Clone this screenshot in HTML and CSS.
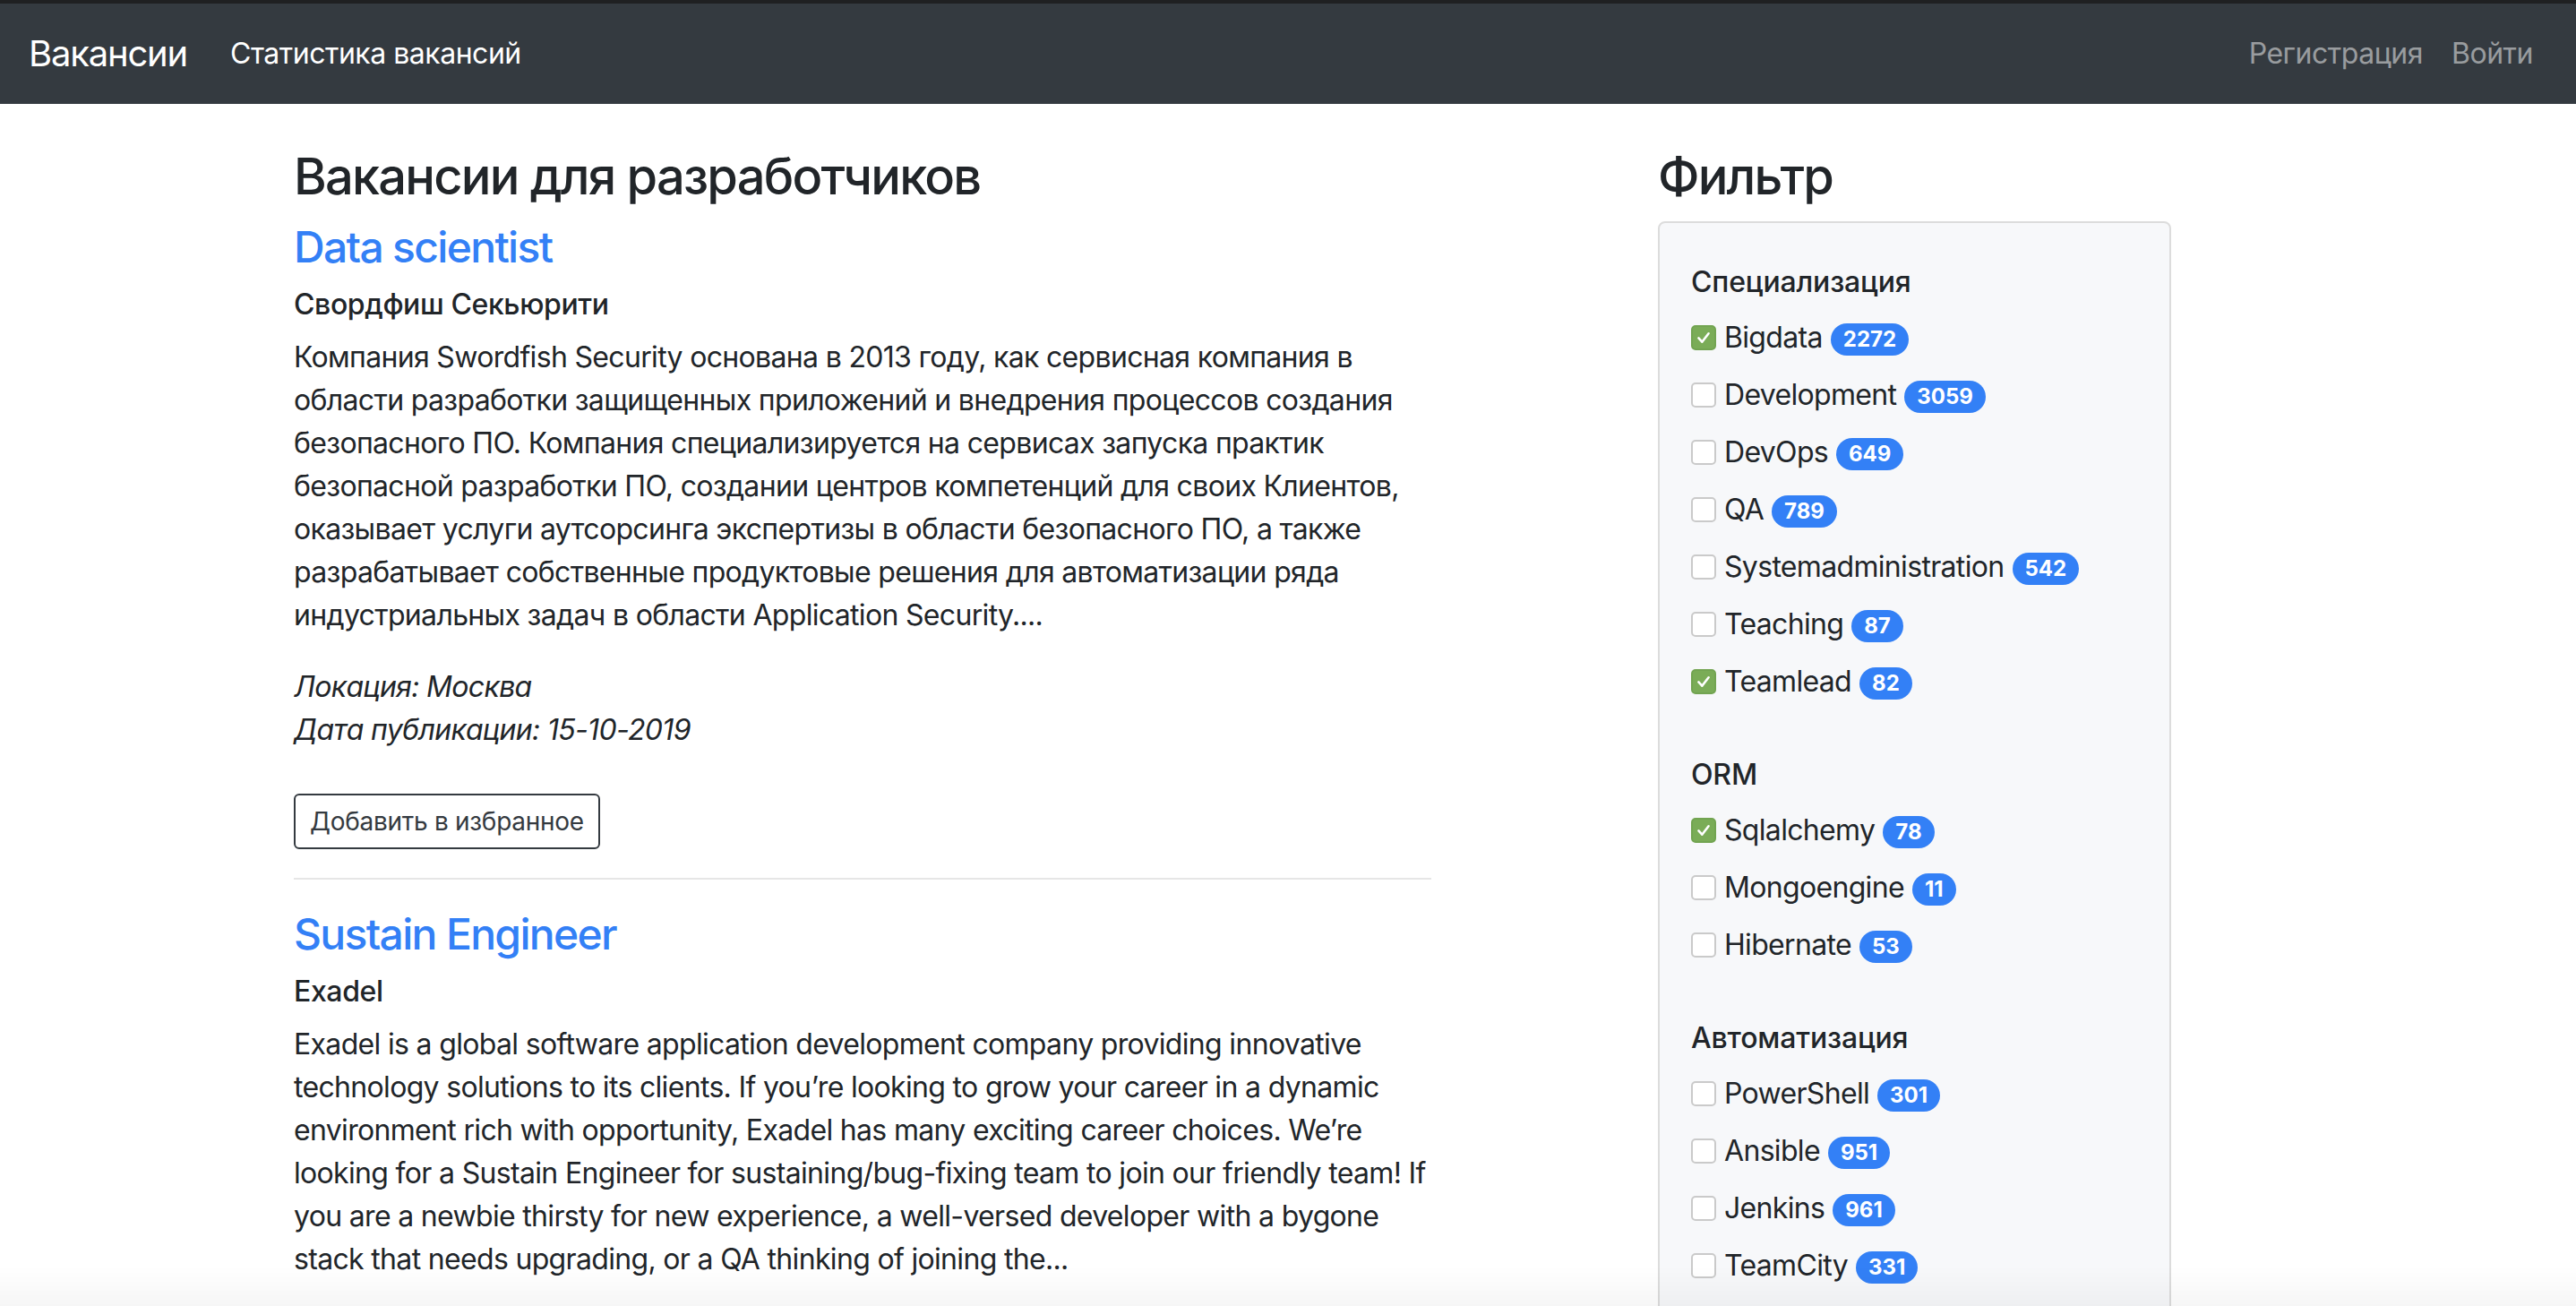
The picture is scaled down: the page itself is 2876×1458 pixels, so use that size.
FILE: index.html
```html
<!DOCTYPE html>
<html lang="ru">
<head>
<meta charset="utf-8">
<title>Вакансии для разработчиков</title>
<link rel="stylesheet" href="styles.css">
</head>
<body>
<header class="navbar">
  <div class="nav-left">
    <a class="brand" href="#">Вакансии</a>
    <a class="nav-link active" href="#">Статистика вакансий</a>
  </div>
  <div class="nav-right">
    <a class="nav-link muted" href="#">Регистрация</a>
    <a class="nav-link muted" href="#">Войти</a>
  </div>
</header>

<div class="container">
  <main class="main-col">
    <h3 class="page-title">Вакансии для разработчиков</h3>

    <article class="job">
      <h4 class="job-title"><a href="#">Data scientist</a></h4>
      <h6 class="company">Свордфиш Секьюрити</h6>
      <p class="desc">Компания Swordfish Security основана в 2013 году, как сервисная компания в<br>области разработки защищенных приложений и внедрения процессов создания<br>безопасного ПО. Компания специализируется на сервисах запуска практик<br>безопасной разработки ПО, создании центров компетенций для своих Клиентов,<br>оказывает услуги аутсорсинга экспертизы в области безопасного ПО, а также<br>разрабатывает собственные продуктовые решения для автоматизации ряда<br>индустриальных задач в области Application Security....</p>
      <p class="meta"><em>Локация: Москва</em><br><em>Дата публикации: 15-10-2019</em></p>
      <button class="btn-fav" type="button">Добавить в избранное</button>
    </article>
    <hr class="divider">

    <article class="job">
      <h4 class="job-title"><a href="#">Sustain Engineer</a></h4>
      <h6 class="company">Exadel</h6>
      <p class="desc">Exadel is a global software application development company providing innovative<br>technology solutions to its clients. If you’re looking to grow your career in a dynamic<br>environment rich with opportunity, Exadel has many exciting career choices. We’re<br>looking for a Sustain Engineer for sustaining/bug-fixing team to join our friendly team! If<br>you are a newbie thirsty for new experience, a well-versed developer with a bygone<br>stack that needs upgrading, or a QA thinking of joining the...</p>
    </article>
  </main>

  <aside class="filter-col">
    <h3 class="page-title">Фильтр</h3>
    <div class="filter-card">
      <section class="filter-group">
        <h6 class="group-title">Специализация</h6>
        <div class="item"><span class="check on"><svg viewBox="0 0 28 28"><path d="M7.5 14.5l4.5 5 8.5-11"/></svg></span><span class="name">Bigdata</span><span class="badge">2272</span></div>
        <div class="item"><span class="check"></span><span class="name">Development</span><span class="badge">3059</span></div>
        <div class="item"><span class="check"></span><span class="name">DevOps</span><span class="badge">649</span></div>
        <div class="item"><span class="check"></span><span class="name">QA</span><span class="badge">789</span></div>
        <div class="item"><span class="check"></span><span class="name">Systemadministration</span><span class="badge">542</span></div>
        <div class="item"><span class="check"></span><span class="name">Teaching</span><span class="badge">87</span></div>
        <div class="item"><span class="check on"><svg viewBox="0 0 28 28"><path d="M7.5 14.5l4.5 5 8.5-11"/></svg></span><span class="name">Teamlead</span><span class="badge">82</span></div>
      </section>
      <section class="filter-group">
        <h6 class="group-title">ORM</h6>
        <div class="item"><span class="check on"><svg viewBox="0 0 28 28"><path d="M7.5 14.5l4.5 5 8.5-11"/></svg></span><span class="name">Sqlalchemy</span><span class="badge">78</span></div>
        <div class="item"><span class="check"></span><span class="name">Mongoengine</span><span class="badge">11</span></div>
        <div class="item"><span class="check"></span><span class="name">Hibernate</span><span class="badge">53</span></div>
      </section>
      <section class="filter-group">
        <h6 class="group-title">Автоматизация</h6>
        <div class="item"><span class="check"></span><span class="name">PowerShell</span><span class="badge">301</span></div>
        <div class="item"><span class="check"></span><span class="name">Ansible</span><span class="badge">951</span></div>
        <div class="item"><span class="check"></span><span class="name">Jenkins</span><span class="badge">961</span></div>
        <div class="item"><span class="check"></span><span class="name">TeamCity</span><span class="badge">331</span></div>
      </section>
    </div>
  </aside>
</div>

<div class="bottom-fade"></div>
</body>
</html>
```

FILE: styles.css
```css
* { box-sizing: border-box; }

html, body {
  margin: 0;
  padding: 0;
  background: #ffffff;
}

body {
  font-family: Inter, "Noto Sans", "Liberation Sans", sans-serif;
  font-size: 32px;
  line-height: 48px;
  letter-spacing: -0.021em;
  color: #212529;
}

a { text-decoration: none; }

/* ---------- navbar ---------- */
.navbar {
  display: flex;
  justify-content: space-between;
  align-items: center;
  height: 116px;
  border-top: 4px solid #1f2022;
  background: #343a40;
  padding: 0 32px;
}

.nav-left, .nav-right {
  display: flex;
  align-items: center;
}

.brand {
  font-size: 40px;
  line-height: 60px;
  letter-spacing: -0.03em;
  color: #ffffff;
  margin-right: 32px;
}

.nav-link {
  font-size: 32px;
  line-height: 48px;
  letter-spacing: -0.015em;
  padding: 0 16px;
  color: #ffffff;
}

.nav-link.muted {
  color: rgba(255, 255, 255, 0.5);
}

/* ---------- layout ---------- */
.container {
  width: 2280px;
  margin: 0 auto;
  padding: 48px 30px 0;
  display: grid;
  grid-template-columns: 1270px 573px;
  column-gap: 253px;
  align-items: start;
}

.page-title {
  margin: 0 0 16px;
  font-size: 56px;
  line-height: 67px;
  font-weight: 500;
  letter-spacing: -0.032em;
  color: #212529;
}

/* ---------- jobs ---------- */
.job-title {
  margin: 0 0 16px;
  font-size: 48px;
  line-height: 58px;
  font-weight: 500;
  letter-spacing: -0.035em;
}

.job-title a { color: #3380f6; }

.company {
  margin: 0 0 16px;
  font-size: 32px;
  line-height: 38px;
  font-weight: 500;
  letter-spacing: -0.012em;
}

.desc {
  margin: 0 0 32px;
  white-space: nowrap;
}

.meta {
  margin: 0 0 47px;
}

.meta em { font-style: italic; }

.btn-fav {
  font-family: inherit;
  font-size: 28px;
  line-height: 42px;
  letter-spacing: -0.01em;
  padding: 8px 16px;
  border: 2px solid #343a40;
  border-radius: 6px;
  background: transparent;
  color: #343a40;
  cursor: pointer;
}

.divider {
  border: 0;
  border-top: 2px solid #e6e6e6;
  margin: 32px 0;
}

/* ---------- filter ---------- */
.filter-card {
  background: #f7f8fa;
  border: 2px solid #dcdcdc;
  border-radius: 8px;
  padding: 44px 35px 40px;
}

.filter-group {
  margin-bottom: 58px;
}

.group-title {
  margin: 0 0 16px;
  font-size: 32px;
  line-height: 44px;
  font-weight: 500;
  letter-spacing: -0.005em;
}

.item {
  display: flex;
  align-items: center;
  height: 48px;
  margin-bottom: 16px;
}

.check {
  width: 28px;
  height: 28px;
  flex: none;
  border: 2px solid #cacaca;
  border-radius: 5px;
  background: #ffffff;
  margin-right: 9px;
  display: flex;
  align-items: center;
  justify-content: center;
}

.check.on {
  background: #7aac57;
  border-color: #72a451;
}

.check svg {
  width: 26px;
  height: 26px;
}

.check svg path {
  fill: none;
  stroke: #ffffff;
  stroke-width: 3;
  stroke-linecap: round;
  stroke-linejoin: round;
}

.name { white-space: nowrap; }

.badge {
  margin-left: 9px;
  font-size: 24px;
  line-height: 24px;
  font-weight: 700;
  letter-spacing: 0;
  color: #ffffff;
  background: #3380f6;
  border-radius: 320px;
  padding: 6px 14px;
  margin-top: 4px;
}

/* ---------- window bottom shade ---------- */
.bottom-fade {
  position: fixed;
  left: 0;
  right: 0;
  bottom: 0;
  height: 44px;
  background: linear-gradient(to bottom, rgba(0, 0, 0, 0), rgba(0, 0, 0, 0.035));
  pointer-events: none;
}
```
